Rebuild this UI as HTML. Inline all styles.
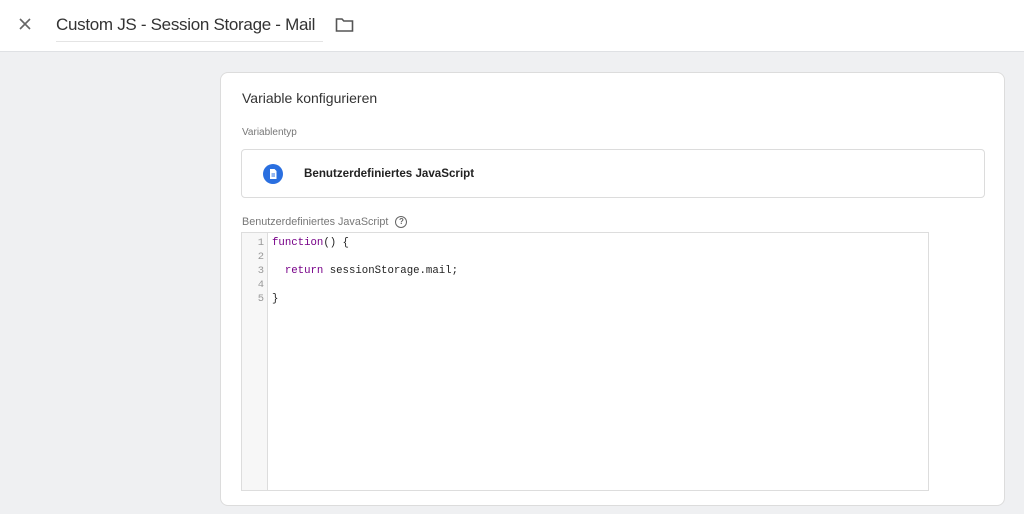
<!DOCTYPE html>
<html><head><meta charset="utf-8"><style>
*{box-sizing:border-box;margin:0;padding:0}
body{width:1024px;height:514px;background:#eff0f2;font-family:"Liberation Sans",sans-serif;position:relative;overflow:hidden}
.top{position:absolute;left:0;top:0;width:1024px;height:52px;background:#fff;border-bottom:1px solid #dfe1e4}
.title{position:absolute;left:56px;top:15px;font-size:17px;letter-spacing:-0.3px;color:#333;padding-bottom:6px;border-bottom:1px solid #e4e4e4;width:267px;white-space:nowrap}
.card{position:absolute;left:220px;top:72px;width:785px;height:434px;background:#fff;border:1px solid #dcdcdc;border-radius:8px}
.h{position:absolute;left:21px;top:17px;font-size:14px;color:#333}
.lbl{position:absolute;font-size:10px;color:#777}
.type{position:absolute;left:20px;top:76px;width:744px;height:49px;border:1px solid #dcdcdc;border-radius:4px}
.ic{position:absolute;left:21px;top:14px;width:20px;height:20px;border-radius:50%;background:#2a6fe0}
.tt{position:absolute;left:62px;top:17px;font-size:11.6px;font-weight:bold;color:#222}
.code{position:absolute;left:20px;top:159px;width:688px;height:259px;border:1px solid #ddd}
.gut{position:absolute;left:0;top:0;width:26px;height:100%;background:#f7f7f7;border-right:1px solid #ddd;font-family:"Liberation Mono",monospace;font-size:10.5px;color:#999;text-align:right;padding:3px 3px 0 0;line-height:14px}
.src{position:absolute;left:30px;top:3px;font-family:"Liberation Mono",monospace;font-size:10.7px;line-height:14px;color:#222;white-space:pre}
.k{color:#770088}
</style></head><body>
<div class="top">
<svg style="position:absolute;left:19px;top:18px" width="12" height="12" viewBox="0 0 12 12"><path d="M1 1L11 11M11 1L1 11" stroke="#666" stroke-width="1.6"/></svg>
<div class="title">Custom JS - Session Storage - Mail</div>
<svg style="position:absolute;left:335px;top:17px" width="19" height="16" viewBox="0 0 19 16"><path d="M1.5 2h5.5l1.8 2H17.5v10h-16z" fill="none" stroke="#555" stroke-width="1.6"/></svg></div>
<div class="card">
<div class="h">Variable konfigurieren</div>
<div class="lbl" style="left:21px;top:54px">Variablentyp</div>
<div class="type"><div class="ic"><svg width="20" height="20" viewBox="0 0 20 20"><path d="M7 5h4.5l2 2v8h-6.5z" fill="#fff"/><path d="M8.5 10h3.5M8.5 12h3.5" stroke="#2a6fe0" stroke-width="0.9"/></svg></div><div class="tt">Benutzerdefiniertes JavaScript</div></div>
<div class="lbl" style="left:21px;top:143px;font-size:10.8px">Benutzerdefiniertes JavaScript <span style="display:inline-block;width:12px;height:12px;border:1.3px solid #666;border-radius:50%;font-size:8px;text-align:center;line-height:10px;color:#666;margin-left:4px;font-weight:bold;vertical-align:middle">?</span></div>
<div class="code"><div class="gut">1<br>2<br>3<br>4<br>5</div>
<div class="src"><span class="k">function</span>() {

  <span class="k">return</span> sessionStorage.mail;

}</div></div>
</div>
</body></html>
